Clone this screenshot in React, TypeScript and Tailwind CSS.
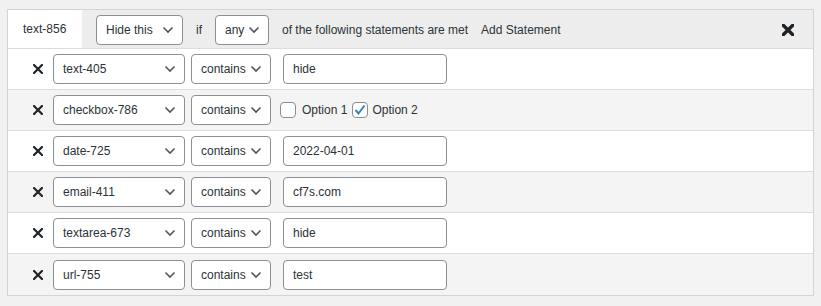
import React from 'react';

const font = { fontFamily: '"Liberation Sans", Arial, sans-serif' };

function Chevron() {
  return (
    <svg width="12" height="8" viewBox="0 0 12 8" className="shrink-0">
      <polyline points="1.5,1.5 6,6 10.5,1.5" fill="none" stroke="#50575e" strokeWidth="1.6" />
    </svg>
  );
}

function Select({ label, w }: { label: string; w: string }) {
  return (
    <div className={`${w} h-[30px] shrink-0 flex items-center justify-between pl-[9px] pr-[8px] bg-white border border-[#8c8f94] rounded-[4px] text-[#2c3338]`}>
      <span>{label}</span>
      <Chevron />
    </div>
  );
}

function Cross({ size = 10, sw = 2.2 }: { size?: number; sw?: number }) {
  return (
    <svg width={size} height={size} viewBox="0 0 10 10" className="shrink-0">
      <path d="M1 1 L9 9 M9 1 L1 9" stroke="#1d2327" strokeWidth={sw} strokeLinecap="square" />
    </svg>
  );
}

function Checkbox({ checked }: { checked?: boolean }) {
  return (
    <div className="w-[16px] h-[16px] shrink-0 bg-white border border-[#8c8f94] rounded-[4px] flex items-center justify-center">
      {checked && (
        <svg width="14" height="14" viewBox="0 0 14 14">
          <polyline points="2.5,7 5.5,10.5 11.5,2.5" fill="none" stroke="#3582c4" strokeWidth="2" />
        </svg>
      )}
    </div>
  );
}

const rows = [
  { field: 'text-405', value: 'hide' },
  { field: 'checkbox-786', value: null },
  { field: 'date-725', value: '2022-04-01' },
  { field: 'email-411', value: 'cf7s.com' },
  { field: 'textarea-673', value: 'hide' },
  { field: 'url-755', value: 'test' },
];

export default function App() {
  return (
    <div className="w-[821px] h-[306px] bg-[#f1f1f1] pt-[9px] pl-[7px] text-[12px] text-[#2c3338]" style={font}>
      <div className="w-[807px] border border-[#d4d4d4] bg-white">
        <div className="h-[39px] flex bg-[#ededed] border-b border-[#dcdcdc]">
          <div className="w-[74px] bg-white flex items-center pl-[15px]">text-856</div>
          <div className="flex-1 flex items-center pt-[2px] pl-[14px] pr-[19px]">
            <Select label="Hide this" w="w-[87px]" />
            <span className="ml-[13px]">if</span>
            <div className="ml-[13px]">
              <Select label="any" w="w-[54px]" />
            </div>
            <span className="ml-[13px]">of the following statements are met</span>
            <span className="ml-[13px]">Add Statement</span>
            <div className="ml-auto">
              <Cross size={12} sw={2.8} />
            </div>
          </div>
        </div>
        {rows.map((r, i) => (
          <div
            key={r.field}
            className={`h-[41px] flex items-center pl-[25px] ${i % 2 ? 'bg-[#f4f4f4]' : 'bg-white'} ${i < rows.length - 1 ? 'border-b border-[#dcdcdc]' : 'h-[40px]'}`}
          >
            <Cross />
            <div className="ml-[10px]">
              <Select label={r.field} w="w-[132px]" />
            </div>
            <div className="ml-[6px]">
              <Select label="contains" w="w-[80px]" />
            </div>
            {r.value !== null ? (
              <div className="ml-[12px] w-[164px] h-[30px] flex items-center pl-[9px] bg-white border border-[#8c8f94] rounded-[4px]">
                {r.value}
              </div>
            ) : (
              <div className="ml-[9px] flex items-center">
                <Checkbox />
                <span className="ml-[6px]">Option 1</span>
                <div className="ml-[5px]">
                  <Checkbox checked />
                </div>
                <span className="ml-[4px]">Option 2</span>
              </div>
            )}
          </div>
        ))}
      </div>
    </div>
  );
}
